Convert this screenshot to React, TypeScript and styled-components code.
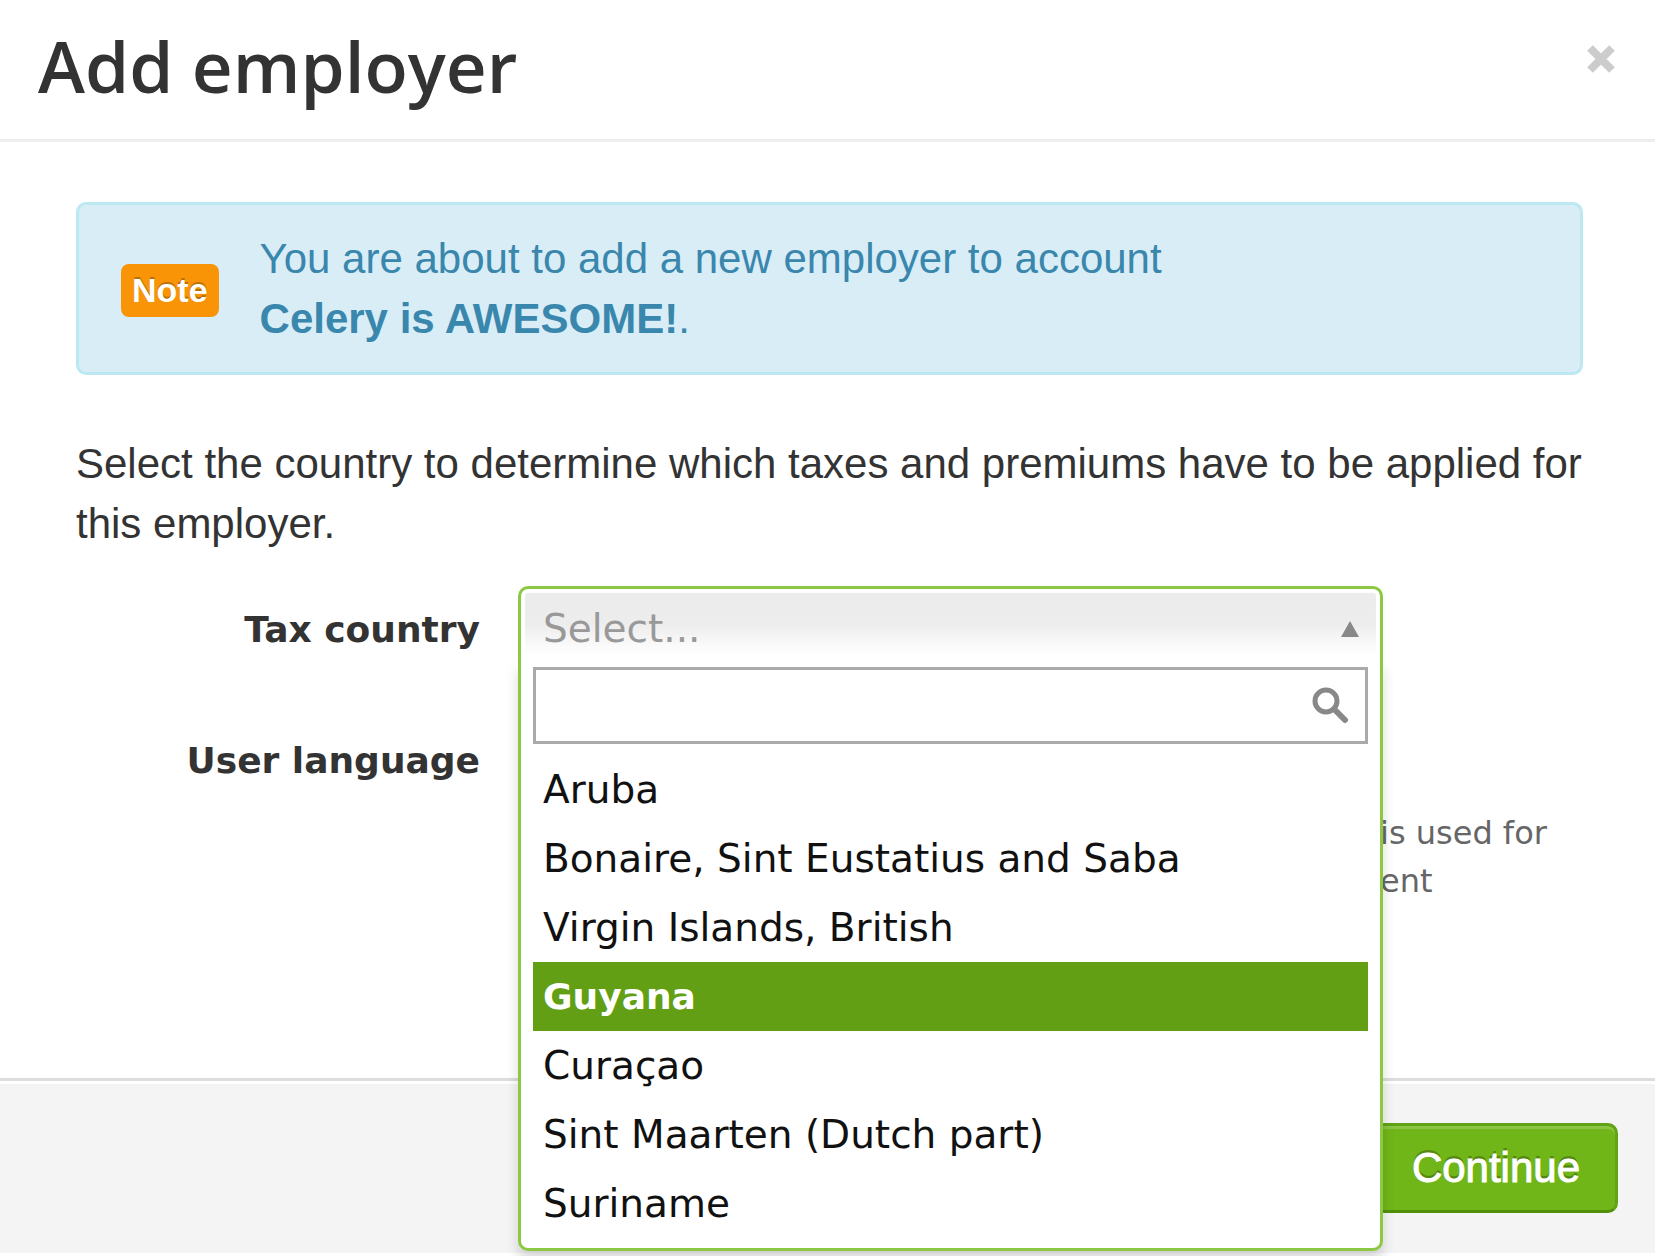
import React, { useState } from "react";
import styled, { createGlobalStyle, css } from "styled-components";

const sans = `"Liberation Sans", Arial, sans-serif`;
const wide = `Verdana, "DejaVu Sans", sans-serif`;

const GlobalStyle = createGlobalStyle`
  *, *::before, *::after { box-sizing: border-box; }
  body { margin: 0; background: #fff; color: #333; font-family: ${sans}; }
`;

const Dialog = styled.main`
  display: flex;
  flex-direction: column;
  min-height: 100vh;
  background: #fff;
`;

const Header = styled.header`
  display: flex;
  justify-content: space-between;
  align-items: flex-start;
  padding: 16px 39px 23px 38px;
  border-bottom: 3px solid #eee;
`;

const Title = styled.h1`
  margin: 0;
  font: 600 71px/100px "Trebuchet MS", "Open Sans", sans-serif;
  color: #333;
`;

const CloseButton = styled.button`
  display: flex;
  margin: 28px 0 0;
  padding: 0;
  border: 0;
  background: none;
  color: #ccc;
  cursor: pointer;
`;

const Body = styled.section`
  flex: 1;
  padding: 60px 72px 60px 76px;
`;

const Note = styled.div`
  display: flex;
  align-items: center;
  gap: 41px;
  padding: 24px 42px 23px;
  border: 3px solid #bce8f1;
  border-radius: 10px;
  background: #d9edf7;
  color: #3a87ad;
  font-size: 42px;
  line-height: 60px;
`;

const Badge = styled.span`
  margin-top: 3px;
  padding: 0 11px;
  border-radius: 8px;
  background: #f89406;
  color: #fff;
  font-size: 34px;
  font-weight: bold;
  line-height: 53px;
  text-shadow: 0 -2px 0 rgba(0, 0, 0, 0.25);
`;

const NoteText = styled.p`
  margin: 0;
`;

const Intro = styled.p`
  margin: 59px 0 32px;
  font-size: 42px;
  line-height: 60px;
`;

const Form = styled.form`
  display: grid;
  gap: 57px;
`;

const Row = styled.div`
  display: grid;
  grid-template-columns: 404px 1fr;
  column-gap: 38px;
  font-family: ${wide};
`;

const Label = styled.label`
  font-size: 36px;
  font-weight: bold;
  line-height: 88px;
  height: 74px;
  text-align: right;
  white-space: nowrap;
`;

const Control = styled.div`
  position: relative;
  max-width: 865px;
`;

const field = css`
  width: 100%;
  height: 74px;
  padding: 8px 21px 0 22px;
  border: 3px solid #aaa;
  border-radius: 10px;
  font-family: ${wide};
  font-size: 39px;
`;

const Trigger = styled.button<{ $open: boolean }>`
  ${field}
  display: flex;
  align-items: center;
  justify-content: space-between;
  border-color: #8dc843;
  background: linear-gradient(#ececec 20%, #ededed 50%, #fff 92%);
  box-shadow: inset 0 0 1px 4px #fff;
  color: #999;
  ${(p) =>
    p.$open &&
    css`
      border-bottom: 0;
      border-radius: 10px 10px 0 0;
    `}
`;

const LanguageSelect = styled.select`
  ${field}
  background: #fff;
  color: #333;
`;

const Menu = styled.div`
  position: absolute;
  z-index: 1;
  top: 74px;
  left: 0;
  right: 0;
  padding: 7px 12px 10px;
  border: 3px solid #8dc843;
  border-top: 0;
  border-radius: 0 0 10px 10px;
  background: #fff;
  box-shadow: 0 10px 13px rgba(0, 0, 0, 0.15);
`;

const SearchBox = styled.div`
  display: flex;
  align-items: center;
  height: 77px;
  padding-right: 16px;
  border: 3px solid #aaa;
  color: #888;
`;

const SearchInput = styled.input`
  flex: 1;
  min-width: 0;
  height: 100%;
  padding: 0 10px;
  border: 0;
  outline: 0;
  background: none;
  font: 39px ${wide};
`;

const Options = styled.ul`
  margin: 11px 0 0;
  padding: 0;
  list-style: none;
`;

const Option = styled.li<{ $active: boolean }>`
  height: 69px;
  padding: 0 10px;
  font-size: ${(p) => (p.$active ? "36px" : "39px")};
  line-height: 70px;
  white-space: nowrap;
  cursor: pointer;
  color: ${(p) => (p.$active ? "#fff" : "#111")};
  background: ${(p) => (p.$active ? "#629f14" : "transparent")};
  font-weight: ${(p) => (p.$active ? "bold" : "normal")};
`;

const Help = styled.p`
  margin: 18px 0 0;
  padding-left: 862px;
  font-size: 32px;
  line-height: 48px;
  white-space: nowrap;
  color: #666;
`;

const Footer = styled.footer`
  display: flex;
  justify-content: flex-end;
  padding: 42px 37px 40px;
  border-top: 3px solid #ddd;
  border-bottom: 3px solid #fff;
  background: #f4f4f4;
  box-shadow: inset 0 3px 0 #fff;
`;

const ContinueButton = styled.button`
  height: 90px;
  padding: 0 35px;
  border: 3px solid #62a315;
  border-bottom-color: #529009;
  border-radius: 10px;
  background: #70b618;
  box-shadow: inset 0 3px 0 rgba(255, 255, 255, 0.2);
  color: #fff;
  font: 42px ${sans};
  -webkit-text-stroke: 1px #fff;
  text-shadow: 0 -3px 0 rgba(0, 0, 0, 0.25);
`;

const countries = [
  "Aruba",
  "Bonaire, Sint Eustatius and Saba",
  "Virgin Islands, British",
  "Guyana",
  "Curaçao",
  "Sint Maarten (Dutch part)",
  "Suriname",
];

function CountryPicker() {
  const [open, setOpen] = useState(true);
  const [query, setQuery] = useState("");
  const [active, setActive] = useState("Guyana");
  const matches = countries.filter((c) => c.toLowerCase().includes(query.toLowerCase()));

  return (
    <Control>
      <Trigger
        type="button"
        id="tax-country"
        aria-haspopup="listbox"
        aria-expanded={open}
        $open={open}
        onClick={() => setOpen(!open)}
      >
        Select...
        <svg width="18" height="16" viewBox="0 0 18 16" aria-hidden="true">
          <path d="M9 0 18 16H0Z" fill="#888" />
        </svg>
      </Trigger>
      {open && (
        <Menu>
          <SearchBox>
            <SearchInput
              aria-label="Search countries"
              value={query}
              onChange={(e) => setQuery(e.target.value)}
            />
            <svg width="37" height="37" viewBox="0 0 37 37" fill="none" stroke="currentColor" aria-hidden="true">
              <circle cx="14" cy="14" r="11" strokeWidth="5" />
              <path d="M22 22 33 33" strokeWidth="6" strokeLinecap="round" />
            </svg>
          </SearchBox>
          <Options role="listbox" aria-label="Tax country">
            {matches.map((c) => (
              <Option
                key={c}
                role="option"
                aria-selected={c === active}
                $active={c === active}
                onMouseEnter={() => setActive(c)}
              >
                {c}
              </Option>
            ))}
          </Options>
        </Menu>
      )}
    </Control>
  );
}

export default function App() {
  return (
    <Dialog>
      <GlobalStyle />
      <Header>
        <Title>Add employer</Title>
        <CloseButton type="button" aria-label="Close">
          <svg width="30" height="30" viewBox="0 0 30 30" stroke="currentColor" strokeWidth="8" aria-hidden="true">
            <path d="M4 4 26 26M26 4 4 26" />
          </svg>
        </CloseButton>
      </Header>
      <Body>
        <Note>
          <Badge>Note</Badge>
          <NoteText>
            You are about to add a new employer to account
            <br />
            <strong>Celery is AWESOME!</strong>.
          </NoteText>
        </Note>
        <Intro>
          Select the country to determine which taxes and premiums have to be applied for this employer.
        </Intro>
        <Form id="employer-form" onSubmit={(e) => e.preventDefault()}>
          <Row>
            <Label htmlFor="tax-country">Tax country</Label>
            <CountryPicker />
          </Row>
          <Row>
            <Label htmlFor="user-language">User language</Label>
            <div>
              <Control>
                <LanguageSelect id="user-language" />
              </Control>
              <Help>
                is used for
                <br />
                ent
              </Help>
            </div>
          </Row>
        </Form>
      </Body>
      <Footer>
        <ContinueButton type="submit" form="employer-form">
          Continue
        </ContinueButton>
      </Footer>
    </Dialog>
  );
}
